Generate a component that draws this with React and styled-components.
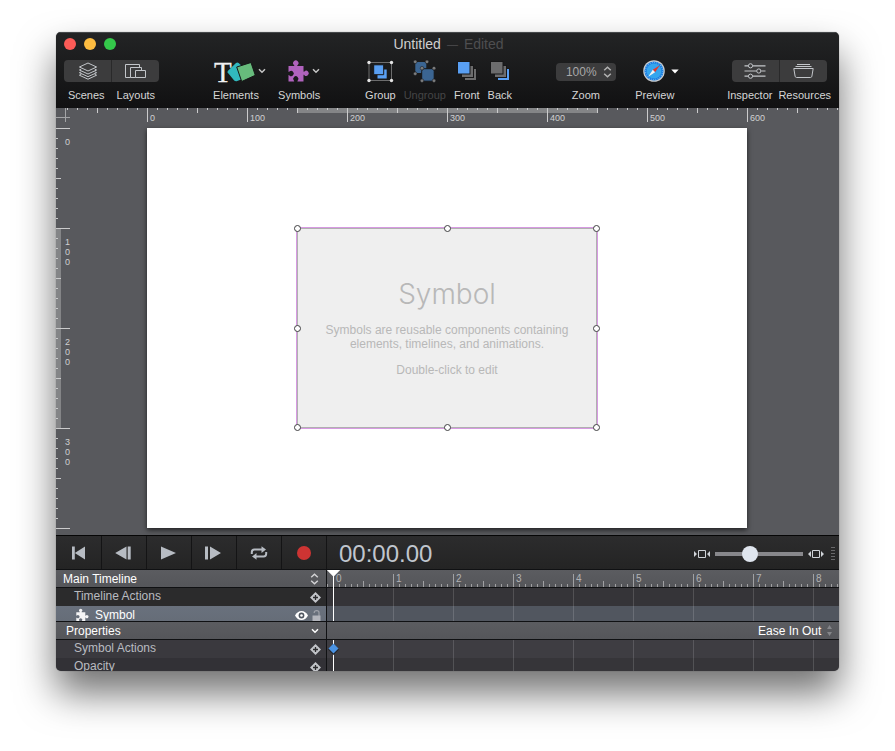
import React from "react";
import styled, { createGlobalStyle, css } from "styled-components";

const sans = '"Liberation Sans", Arial, Helvetica, sans-serif';
const ink = "#101113";
const steel = "#b7bcc3";
const panel = "#58595d";
const tick = "#cbcbcc";

const GlobalStyle = createGlobalStyle`
  *, *::before, *::after { box-sizing: border-box; }
  body { margin: 0; background: #fff; font-family: ${sans}; }
  svg { display: block; flex: none; overflow: visible; }
`;

const plainControl = css`
  appearance: none;
  margin: 0;
  padding: 0;
  border: 0;
  background: none;
  color: inherit;
  font: inherit;
  cursor: default;
`;

const Page = styled.div`
  padding: 32px 56px 80px;
  overflow: hidden;
`;

const Window = styled.main`
  border-radius: 5px;
  box-shadow: 0 0 1px rgba(0, 0, 0, 0.5), 0 22px 38px rgba(0, 0, 0, 0.56);
`;

const WindowBody = styled.div`
  border-radius: 5px;
  overflow: hidden;
  background: ${panel};
`;

/* ---------- header ---------- */

const Header = styled.header`
  height: 76px;
  background: linear-gradient(#232425, #111112);
  box-shadow: inset 0 1px 0 #45484a;
`;

const TitleBar = styled.div`
  display: grid;
  grid-template-columns: 1fr auto 1fr;
  align-items: center;
  height: 23px;
  padding: 0 6px 0 8px;
`;

const Lights = styled.div`
  display: flex;
  gap: 8px;
`;

const Light = styled.button`
  ${plainControl}
  width: 12px;
  height: 12px;
  border-radius: 50%;
  background: ${(p) => p.$color};
`;

const Title = styled.h1`
  display: flex;
  align-items: center;
  gap: 6px;
  margin: 0;
  font-size: 14px;
  line-height: 16px;
  font-weight: 400;
  color: #cfcfcf;
`;

const Faint = styled.span`
  color: #4e4e50;
`;

const Dash = styled(Faint)`
  font-size: 11px;
`;

const Toolbar = styled.div`
  display: flex;
  align-items: flex-start;
  padding: 5px 8px 0;
`;

const Spacer = styled.div`
  flex: ${(p) => p.$grow} 0 0;
`;

const ToolGroup = styled.div`
  display: flex;
  gap: ${(p) => p.$gap};
`;

const Tool = styled.button`
  ${plainControl}
  display: flex;
  flex-direction: column;
  align-items: ${(p) => (p.$indent ? "flex-start" : "center")};
  gap: 6px;
  color: #d6d6d6;
  font-size: 11px;
  line-height: 14px;
  &:disabled { color: #454546; }
`;

const ToolFace = styled.span`
  display: flex;
  align-items: center;
  gap: ${(p) => p.$gap || "0"};
  height: 22px;
  padding-left: ${(p) => p.$indent || "0"};
`;

const SegmentBlock = styled.div`
  display: flex;
  flex-direction: column;
  align-items: center;
  gap: 6px;
`;

const Segments = styled.div`
  display: flex;
  height: 22px;
  border-radius: 4px;
  overflow: hidden;
  background: #3c3c3d;
`;

const Segment = styled.button`
  ${plainControl}
  display: grid;
  place-items: center;
  width: 47px;
  & + & {
    width: 48px;
    border-left: 1px solid #29292a;
  }
`;

const SegmentLabels = styled.div`
  display: flex;
  gap: ${(p) => p.$gap};
  color: #d6d6d6;
  font-size: 11px;
  line-height: 14px;
`;

const ZoomField = styled.div`
  display: flex;
  flex-direction: column;
  align-items: center;
  gap: 7px;
  padding-top: 3px;
  color: #d6d6d6;
  font-size: 11px;
  line-height: 14px;
`;

const SelectShell = styled.div`
  display: flex;
  align-items: center;
  ${(p) => p.$boxed && css`
    width: 60px;
    height: 18px;
    padding: 0 4px 0 10px;
    border-radius: 4px;
    background: #3c3c3d;
    color: #a8a8a8;
  `}
`;

const Select = styled.select`
  ${plainControl}
  flex: ${(p) => (p.$fill ? "1 1 0" : "0 0 auto")};
  min-width: 0;
  font-family: ${sans};
  font-size: 12px;
  line-height: 16px;
  option { color: #000; }
`;

/* ---------- canvas and rulers ---------- */

const TopRuler = styled.div`
  display: flex;
  height: 20px;
`;

const Corner = styled.div`
  flex: 0 0 11px;
  min-width: 0;
`;

const TopScale = styled.div`
  flex: 1 1 0;
  min-width: 0;
  overflow: hidden;
  display: flex;
  padding-left: 80px;
  background:
    linear-gradient(90deg, ${tick} 1px, transparent 1px) 0 0 / 10px 2px repeat-x,
    linear-gradient(90deg, ${tick} 1px, transparent 1px) 30px 0 / 50px 5px repeat-x,
    linear-gradient(90deg, ${tick} 1px, transparent 1px) 80px 0 / 100px 14px repeat-x,
    linear-gradient(#848587, #848587) 230px 0 / 300px 5px no-repeat;
`;

const TopMark = styled.span`
  flex: 0 0 100px;
  padding: 4px 0 0 3px;
  font-size: 9px;
  line-height: 12px;
  color: #d0d0d1;
`;

const Workspace = styled.section`
  display: flex;
`;

const SideRuler = styled.div`
  flex: 0 0 20px;
  background:
    linear-gradient(${tick} 1px, transparent 1px) 0 0 / 2px 10px repeat-y,
    linear-gradient(${tick} 1px, transparent 1px) 0 0 / 5px 50px repeat-y,
    linear-gradient(${tick} 1px, transparent 1px) 0 0 / 14px 100px repeat-y,
    linear-gradient(#848587, #848587) 0 100px / 5px 200px no-repeat;
`;

const SideMark = styled.div`
  display: flex;
  flex-direction: column;
  height: 100px;
  padding: 9px 0 0 9px;
  font-size: 9px;
  line-height: 10px;
  color: #d0d0d1;
`;

const StageArea = styled.div`
  flex: 1 1 0;
  display: flex;
  justify-content: center;
  padding: 0 21px 7px 0;
`;

const Stage = styled.div`
  display: grid;
  place-items: center;
  flex: 0 0 600px;
  height: 400px;
  background: #fff;
  box-shadow: 0 2px 5px rgba(0, 0, 0, 0.65);
`;

const SymbolBox = styled.div`
  position: relative;
  width: 300px;
  height: 200px;
  padding-top: 46px;
  border: 1px solid #b0b0b0;
  box-shadow: 0 0 0 1px #d79ae2;
  background: #efefef;
  text-align: center;
  color: #b8b8b8;
  font-size: 12px;
  line-height: 14px;
`;

const SymbolTitle = styled.h2`
  margin: 0 0 10px;
  font-family: Inter, ${sans};
  font-size: 28px;
  line-height: 38px;
  font-weight: 300;
`;

const SymbolText = styled.p`
  margin: 0 20px 12px;
`;

const Handle = styled.span`
  position: absolute;
  left: ${(p) => p.$x};
  top: ${(p) => p.$y};
  width: 7px;
  height: 7px;
  margin: -3px;
  border: 1px solid #3f3f41;
  border-radius: 50%;
  background: #fff;
`;

/* ---------- transport ---------- */

const Transport = styled.div`
  display: flex;
  align-items: stretch;
  height: 35px;
  border-top: 1px solid #060606;
  border-bottom: 1px solid ${ink};
  background: linear-gradient(#2c2c2d, #242424);
`;

const TransportButton = styled.button`
  ${plainControl}
  display: grid;
  place-items: center;
  flex: 0 0 45px;
  & + & { border-left: 1px solid #141415; }
`;

const Clock = styled.output`
  display: flex;
  align-items: center;
  flex: 1 1 0;
  padding: 2px 0 0 12px;
  border-left: 1px solid #141415;
  font-size: 24px;
  color: #c0c6ce;
`;

const TimeZoom = styled.label`
  display: flex;
  align-items: center;
  gap: 5px;
  padding: 2px 4px 0 0;
`;

const Range = styled.input`
  appearance: none;
  width: 88px;
  height: 16px;
  margin: 0;
  background: linear-gradient(#87878b, #87878b) 0 6px / 100% 4px no-repeat;
  &::-webkit-slider-thumb {
    appearance: none;
    width: 16px;
    height: 16px;
    border-radius: 50%;
    background: #dfe5ee;
  }
`;

const Grip = styled.span`
  width: 4px;
  height: 13px;
  margin-left: 2px;
  background: repeating-linear-gradient(#68686a 0 1px, transparent 1px 3px);
`;

/* ---------- timeline ---------- */

const Split = styled.section`
  display: grid;
  grid-template-columns: 270px 1fr;
`;

const Names = styled.div`
  min-width: 0;
`;

const Tracks = styled.div`
  position: relative;
  min-width: 0;
  border-left: 1px solid ${ink};
`;

const PanelHead = styled.div`
  display: flex;
  align-items: center;
  height: 18px;
  padding: 0 7px;
  border-bottom: 1px solid ${ink};
  background: linear-gradient(#5b5c60, #55565a);
  color: #fff;
  font-size: 12px;
`;

const HeadShell = styled(SelectShell)`
  flex: ${(p) => (p.$fill ? "1 1 0" : "0 0 auto")};
  gap: ${(p) => (p.$fill ? "0" : "5px")};
  margin-left: ${(p) => (p.$fill ? "0" : "auto")};
`;

const Disclosure = styled.button`
  ${plainControl}
  display: flex;
  flex: 1 1 0;
  align-items: center;
  justify-content: space-between;
  padding-left: 3px;
  line-height: 16px;
`;

const rowTones = {
  actions: ["#2b2b2c", "#353438"],
  selected: ["linear-gradient(#69717d, #666d78)", "#51565f"],
  light: ["#3a393e", "#3e3d42"],
  dark: ["#323136", "#363539"],
};

const NameRow = styled.div`
  display: flex;
  align-items: flex-start;
  height: ${(p) => p.$height};
  padding: 0 5px 0 18px;
  overflow: hidden;
  background: ${(p) => rowTones[p.$tone][0]};
  color: ${(p) => (p.$tone === "selected" ? "#fff" : "#b9bbc0")};
  font-size: 12px;
  line-height: ${(p) => (p.$tone === "selected" ? "19px" : "17px")};
  border-bottom: ${(p) => (p.$closing ? `1px solid ${ink}` : "0")};
`;

const RowName = styled.span`
  flex: 1 1 0;
`;

const RowIcon = styled.span`
  padding: 3px 7px 0 2px;
`;

const IconButton = styled.button`
  ${plainControl}
  padding-top: 4px;
  margin-left: 4px;
`;

const TrackRow = styled.div`
  height: ${(p) => p.$height};
  background:
    linear-gradient(90deg, rgba(255, 255, 255, 0.14) 1px, transparent 1px) 6px 0 / 60px 100%,
    ${(p) => rowTones[p.$tone][1]};
  border-bottom: ${(p) => (p.$closing ? `1px solid ${ink}` : "0")};
`;

const TimeScale = styled.div`
  display: flex;
  height: 18px;
  padding-left: 6px;
  overflow: hidden;
  border-bottom: 1px solid ${ink};
  background:
    linear-gradient(90deg, #a0a0a2 1px, transparent 1px) 0 100% / 6px 3px repeat-x,
    linear-gradient(90deg, #a0a0a2 1px, transparent 1px) 6px 100% / 30px 6px repeat-x,
    linear-gradient(90deg, #a0a0a2 1px, transparent 1px) 6px 100% / 60px 13px repeat-x,
    linear-gradient(#5b5c60, #55565a);
`;

const TimeMark = styled.span`
  flex: 0 0 60px;
  padding: 4px 0 0 3px;
  font-size: 10px;
  line-height: 10px;
  color: #b2b2b4;
`;

const Playhead = styled.div`
  position: absolute;
  left: 6px;
  top: 0;
  bottom: 1px;
  width: 1px;
  background: #fff;
`;

const PlayheadCap = styled.svg`
  position: absolute;
  left: -7px;
  top: 0;
`;

const PropertyPlayhead = styled(Playhead)`
  top: 18px;
  bottom: 0;
`;

const Keyframe = styled.svg`
  position: absolute;
  left: -5px;
  top: 3px;
`;

/* ---------- icons ---------- */

const PUZZLE =
  "M.5 5H6C6.6 5 6.3 4.4 5.9 4A2.7 2.7 0 1 1 9.7 4C9.2 4.5 9 5 9.6 5H15.5V10.3C15.5 10.9 16 10.8 16.4 10.4A2.6 2.6 0 1 1 16.4 14.2C16 13.7 15.5 13.6 15.5 14.3V20.5H9.8C9.2 20.5 9.4 20 9.8 19.5A2.6 2.6 0 1 0 5.8 19.5C6.2 20 6.4 20.5 5.8 20.5H.5V14.5C.5 13.9 .9 14 1.4 14.4A2.6 2.6 0 1 0 1.4 10.6C.9 11 .5 11 .5 10.4Z";

const Chevron = ({ color = "#c4c4c4", size = 8 }) => (
  <svg width={size} height="6" viewBox="0 0 8 6">
    <path d="M1 1.2L4 4.2L7 1.2" fill="none" stroke={color} strokeWidth="1.5" />
  </svg>
);

const UpDown = ({ color = "#b4b4b4" }) => (
  <svg width="9" height="12" viewBox="0 0 9 12">
    <path d="M1.2 4.3L4.5 1.2L7.8 4.3M1.2 7.7L4.5 10.8L7.8 7.7" fill="none" stroke={color} strokeWidth="1.4" />
  </svg>
);

const UpDownSolid = () => (
  <svg width="5" height="11" viewBox="0 0 5 11">
    <path d="M0 4L2.5 0L5 4ZM0 7L2.5 11L5 7Z" fill="#85868a" />
  </svg>
);

const ScenesIcon = () => (
  <svg width="20" height="18" viewBox="0 0 20 18" fill="none" stroke="#c3c6ca">
    <path d="M10 1L18.6 5L10 9L1.4 5Z" />
    <path d="M3.3 7L1.4 8L10 12L18.6 8L16.7 7M3.3 9.8L1.4 10.7L10 14.7L18.6 10.7L16.7 9.8M3.3 12.3L1.4 13.2L10 17.2L18.6 13.2L16.7 12.3" />
  </svg>
);

const LayoutsIcon = () => (
  <svg width="21" height="15" viewBox="0 0 21 15" fill="none" stroke="#c3c6ca">
    <path d="M5.5 13.5H.5V.5H14.5V3.5M10.5 13.5H5.5V3.5H16.5V6.5" />
    <path d="M10.5 6.5H20.5V13.5H10.5Z" />
  </svg>
);

const ElementsIcon = () => (
  <svg width="41" height="22" viewBox="0 0 41 22">
    <text x="-1" y="22" fontFamily='"Liberation Serif", serif' fontSize="29" fill="#f0f1f2" stroke="#f0f1f2" strokeWidth=".3">T</text>
    <path d="M12.6 12.5Q12.3 11.4 13 10.7L21 3Q22.4 2 23.6 3L29 8L27.5 19L21.6 21.2Q20 21.4 19.2 20.5Z" fill="#31b9be" />
    <path d="M21.7 7L36 2.5L40.3 15.3L26.7 21.5Z" fill="#67bb7c" stroke="#161617" />
  </svg>
);

const PuzzleIcon = () => (
  <svg width="20" height="21" viewBox="0 0 20 21">
    <path d={PUZZLE} fill="#b062bd" />
  </svg>
);

const GroupIcon = () => (
  <svg width="27" height="22" viewBox="0 0 27 22">
    <path d="M2 2.5H24.5V20.5H2Z" fill="none" stroke="#6c6c6d" />
    <path d="M10.5 9.5H19.7V18.5H10.5Z" fill="#599ff3" />
    <path d="M6.7 4.8H16.7V14.7H6.7Z" fill="#599ff3" stroke="#171718" />
    {[[2, 2.5], [24.5, 2.5], [2, 20.5], [24.5, 20.5]].map(([x, y]) => (
      <circle key={`${x}-${y}`} cx={x} cy={y} r="1.7" fill="#e3e3e3" />
    ))}
  </svg>
);

const UngroupIcon = () => (
  <svg width="24" height="22" viewBox="0 0 24 22">
    <rect x="2.3" y="2" width="11" height="11" rx="2" fill="#3b6592" />
    <rect x="8.7" y="8.7" width="12.5" height="12.5" rx="2.5" fill="#3b6592" stroke="#171718" />
    {[[2.2, 1.8], [14, 1.8], [2.2, 13.7], [9, 8.2], [21, 8.2], [9, 20.7], [21, 20.7]].map(([x, y]) => (
      <circle key={`${x}-${y}`} cx={x} cy={y} r="1.8" fill="#7b7c7d" stroke="#171718" strokeWidth=".5" />
    ))}
  </svg>
);

const StackIcon = ({ front, back }) => (
  <svg width="20" height="20" viewBox="0 0 20 20" stroke="#171718">
    <rect x="7.5" y="7.5" width="12" height="12" fill={back} />
    <rect x="4.5" y="4.5" width="12" height="12" fill="#6c6c6d" />
    <rect x=".5" y=".5" width="12.5" height="12.5" fill={front} />
  </svg>
);

const CompassIcon = () => (
  <svg width="22" height="22" viewBox="0 0 22 22">
    <circle cx="11" cy="11" r="10.8" fill="#c9ccd0" />
    <circle cx="11" cy="11" r="9.6" fill="#1d7fe0" />
    <circle cx="11" cy="11" r="7.4" fill="#35a5ee" />
    <circle cx="11" cy="11" r="8.6" fill="none" stroke="#8fc8f5" strokeWidth="1.2" strokeDasharray=".6 1.65" />
    <path d="M16.8 5.2L12.1 12.2L9.8 9.8Z" fill="#e5372c" />
    <path d="M5.2 16.8L9.8 9.8L12.1 12.2Z" fill="#f3f3f3" />
  </svg>
);

const CaretIcon = () => (
  <svg width="8" height="5" viewBox="0 0 8 5">
    <path d="M.3 .5H7.7L4 4.5Z" fill="#fff" />
  </svg>
);

const InspectorIcon = () => (
  <svg width="22" height="16" viewBox="0 0 22 16" fill="none" stroke="#c3c6ca">
    <path d="M.5 2.8H4.2M8.8 2.8H21.5M.5 8H12.5M17.2 8H21.5M.5 13.2H4.2M8.8 13.2H21.5" strokeWidth="1.2" />
    <circle cx="6.5" cy="2.8" r="2.1" />
    <circle cx="14.8" cy="8" r="2.1" />
    <circle cx="6.5" cy="13.2" r="2.1" />
  </svg>
);

const ResourcesIcon = () => (
  <svg width="21" height="16" viewBox="0 0 21 16" fill="none" stroke="#c3c6ca">
    <path d="M4 1.5H17M2.5 3.5H18.5" />
    <path d="M.8 5.5H20.2L18.9 13.2Q18.6 14.5 17.4 14.5H3.6Q2.4 14.5 2.1 13.2Z" />
  </svg>
);

const TransportIcon = ({ d }) => (
  <svg width="18" height="14" viewBox="0 0 18 14">
    <path d={d} fill={steel} />
  </svg>
);

const LoopIcon = () => (
  <svg width="18" height="14" viewBox="0 0 18 14">
    <path d="M1.8 8V6.2Q1.8 3.6 4.4 3.6H12M16.2 6V7.8Q16.2 10.4 13.6 10.4H6" fill="none" stroke={steel} strokeWidth="2" />
    <path d="M11.5 .3L16 3.6L11.5 6.9ZM6.5 7.1L2 10.4L6.5 13.7Z" fill={steel} />
  </svg>
);

const RecordIcon = () => (
  <svg width="14" height="14" viewBox="0 0 14 14">
    <circle cx="7" cy="7" r="7" fill="#cd3433" />
  </svg>
);

const SpanIcon = ({ outward }) => (
  <svg width="16" height="8" viewBox="0 0 16 8">
    <path d="M4.5 .5H11.5V7.5H4.5Z" fill="none" stroke="#d0d4d9" />
    <path d={outward ? "M3 1V7L0 4ZM13 1V7L16 4Z" : "M0 1V7L3 4ZM16 1V7L13 4Z"} fill="#d0d4d9" />
  </svg>
);

const AddKeyIcon = () => (
  <svg width="11" height="11" viewBox="0 0 11 11">
    <path d="M5.5 0L11 5.5L5.5 11L0 5.5Z" fill="#c2c4c9" />
    <path d="M5.5 3V8M3 5.5H8" stroke="#2c2c2e" strokeWidth="1.3" />
  </svg>
);

const EyeIcon = () => (
  <svg width="13" height="11" viewBox="0 0 13 11">
    <path d="M0 5.5Q2.5 1 6.5 1T13 5.5Q10.5 10 6.5 10T0 5.5Z" fill="#fff" />
    <circle cx="6.5" cy="5.5" r="2.9" fill="#4f5660" />
    <circle cx="6.5" cy="5.5" r="1.3" fill="#fff" />
  </svg>
);

const LockIcon = () => (
  <svg width="9" height="12" viewBox="0 0 9 12">
    <path d="M2.2 3V2.6Q2.2 .7 4.6 .7T7 2.6V6" fill="none" stroke="#9fa2aa" strokeWidth="1.2" />
    <path d="M.5 5.5H8.5V12H.5Z" fill="#b3b5bc" />
  </svg>
);

/* ---------- page ---------- */

const lights = [
  ["Close", "#fc5b57"],
  ["Minimize", "#fdbc40"],
  ["Zoom window", "#34c84a"],
];

const transport = [
  ["Go to start", <TransportIcon key="i" d="M2 .5H4.8V13.5H2ZM15 .5V13.5L4.8 7Z" />],
  ["Previous frame", <TransportIcon key="i" d="M.2 7L11.5 .5V13.5ZM12.7 .5H15.7V13.5H12.7Z" />],
  ["Play", <TransportIcon key="i" d="M1 .5V13.5L16 7Z" />],
  ["Next frame", <TransportIcon key="i" d="M0 .5H3V13.5H0ZM5 .5V13.5L16 7Z" />],
  ["Loop", <LoopIcon key="i" />],
  ["Record", <RecordIcon key="i" />],
];

const handles = [
  ["-1px", "-1px"], ["50%", "-1px"], ["100%", "-1px"],
  ["-1px", "50%"], ["100%", "50%"],
  ["-1px", "100%"], ["50%", "100%"], ["100%", "100%"],
];

function SegmentPair({ gap, items }) {
  return (
    <SegmentBlock>
      <Segments>
        {items.map(([name, icon]) => (
          <Segment key={name} aria-labelledby={`seg-${name}`}>{icon}</Segment>
        ))}
      </Segments>
      <SegmentLabels $gap={gap}>
        {items.map(([name]) => (
          <span key={name} id={`seg-${name}`}>{name}</span>
        ))}
      </SegmentLabels>
    </SegmentBlock>
  );
}

function ToolButton({ label, indent, gap, disabled, children }) {
  return (
    <Tool disabled={disabled} $indent={indent}>
      <ToolFace $indent={indent} $gap={gap}>{children}</ToolFace>
      <span>{label}</span>
    </Tool>
  );
}

function AddKey({ of }) {
  return (
    <IconButton aria-label={`Add keyframe to ${of}`}>
      <AddKeyIcon />
    </IconButton>
  );
}

export default function App() {
  return (
    <Page>
      <GlobalStyle />
      <Window>
        <WindowBody>
          <Header>
            <TitleBar>
              <Lights>
                {lights.map(([name, color]) => (
                  <Light key={name} aria-label={name} $color={color} />
                ))}
              </Lights>
              <Title>
                Untitled <Dash>—</Dash> <Faint>Edited</Faint>
              </Title>
            </TitleBar>
            <Toolbar>
              <SegmentPair gap="12px" items={[["Scenes", <ScenesIcon key="i" />], ["Layouts", <LayoutsIcon key="i" />]]} />
              <Spacer $grow={53} />
              <ToolGroup $gap="12px">
                <ToolButton label="Elements" indent="2px" gap="2px">
                  <ElementsIcon />
                  <Chevron />
                </ToolButton>
                <ToolButton label="Symbols" indent="10px" gap="4px">
                  <PuzzleIcon />
                  <Chevron />
                </ToolButton>
              </ToolGroup>
              <Spacer $grow={44} />
              <ToolGroup $gap="8px">
                <ToolButton label="Group"><GroupIcon /></ToolButton>
                <ToolButton label="Ungroup" disabled><UngroupIcon /></ToolButton>
                <ToolButton label="Front"><StackIcon front="#599ff3" back="#6c6c6d" /></ToolButton>
                <ToolButton label="Back"><StackIcon front="#6c6c6d" back="#599ff3" /></ToolButton>
              </ToolGroup>
              <Spacer $grow={43} />
              <ZoomField>
                <SelectShell $boxed>
                  <Select $fill id="zoom" defaultValue="100%">
                    <option>100%</option>
                  </Select>
                  <UpDown />
                </SelectShell>
                <label htmlFor="zoom">Zoom</label>
              </ZoomField>
              <Spacer $grow={19} />
              <ToolButton label="Preview" indent="8px" gap="6px">
                <CompassIcon />
                <CaretIcon />
              </ToolButton>
              <Spacer $grow={47} />
              <SegmentPair gap="6px" items={[["Inspector", <InspectorIcon key="i" />], ["Resources", <ResourcesIcon key="i" />]]} />
            </Toolbar>
          </Header>

          <TopRuler>
            <Corner>
              <svg width="14" height="14" viewBox="0 0 14 14">
                <path d="M9.5 0V14M0 9.5H14" stroke="#a3a4a6" />
              </svg>
            </Corner>
            <TopScale>
              {[0, 100, 200, 300, 400, 500, 600].map((n) => (
                <TopMark key={n}>{n}</TopMark>
              ))}
            </TopScale>
          </TopRuler>

          <Workspace>
            <SideRuler>
              {[0, 100, 200, 300].map((n) => (
                <SideMark key={n}>
                  {String(n).split("").map((digit, i) => (
                    <span key={i}>{digit}</span>
                  ))}
                </SideMark>
              ))}
            </SideRuler>
            <StageArea>
              <Stage>
                <SymbolBox>
                  <SymbolTitle>Symbol</SymbolTitle>
                  <SymbolText>
                    Symbols are reusable components containing elements, timelines, and animations.
                  </SymbolText>
                  <SymbolText>Double-click to edit</SymbolText>
                  {handles.map(([x, y]) => (
                    <Handle key={x + y} $x={x} $y={y} />
                  ))}
                </SymbolBox>
              </Stage>
            </StageArea>
          </Workspace>

          <Transport>
            {transport.map(([name, icon]) => (
              <TransportButton key={name} aria-label={name}>{icon}</TransportButton>
            ))}
            <Clock>00:00.00</Clock>
            <TimeZoom>
              <SpanIcon />
              <Range type="range" defaultValue={37} aria-label="Timeline zoom" />
              <SpanIcon outward />
              <Grip />
            </TimeZoom>
          </Transport>

          <Split>
            <Names>
              <PanelHead>
                <HeadShell $fill>
                  <Select $fill aria-label="Timeline" defaultValue="Main Timeline">
                    <option>Main Timeline</option>
                  </Select>
                  <UpDown color="#d3d3d5" />
                </HeadShell>
              </PanelHead>
              <NameRow $tone="actions" $height="18px">
                <RowName>Timeline Actions</RowName>
                <AddKey of="Timeline Actions" />
              </NameRow>
              <NameRow $tone="selected" $height="16px" $closing>
                <RowIcon>
                  <svg width="12" height="13" viewBox="0 0 20 21">
                    <path d={PUZZLE} fill="#f4f4f5" />
                  </svg>
                </RowIcon>
                <RowName>Symbol</RowName>
                <IconButton aria-label="Hide Symbol"><EyeIcon /></IconButton>
                <IconButton aria-label="Lock Symbol"><LockIcon /></IconButton>
              </NameRow>
            </Names>
            <Tracks>
              <TimeScale>
                {[0, 1, 2, 3, 4, 5, 6, 7, 8].map((n) => (
                  <TimeMark key={n}>{n}</TimeMark>
                ))}
              </TimeScale>
              <TrackRow $tone="actions" $height="18px" />
              <TrackRow $tone="selected" $height="16px" $closing />
              <Playhead>
                <PlayheadCap width="15" height="7" viewBox="0 0 15 7">
                  <path d="M.8 0H14.2L7.5 6.7Z" fill="#fff" />
                </PlayheadCap>
              </Playhead>
            </Tracks>
          </Split>

          <Split>
            <Names>
              <PanelHead>
                <Disclosure aria-expanded="true">
                  Properties
                  <Chevron color="#fff" />
                </Disclosure>
              </PanelHead>
              <NameRow $tone="light" $height="18px">
                <RowName>Symbol Actions</RowName>
                <AddKey of="Symbol Actions" />
              </NameRow>
              <NameRow $tone="dark" $height="13px">
                <RowName>Opacity</RowName>
                <AddKey of="Opacity" />
              </NameRow>
            </Names>
            <Tracks>
              <PanelHead>
                <HeadShell>
                  <Select aria-label="Timing function" defaultValue="Ease In Out">
                    <option>Ease In Out</option>
                  </Select>
                  <UpDownSolid />
                </HeadShell>
              </PanelHead>
              <TrackRow $tone="light" $height="18px" />
              <TrackRow $tone="dark" $height="13px" />
              <PropertyPlayhead>
                <Keyframe width="11" height="12" viewBox="0 0 11 12">
                  <path d="M5.5 1L11 6.5L5.5 12L0 6.5Z" fill="#222327" />
                  <path d="M5.5 .5L10.5 5.5L5.5 10.5L.5 5.5Z" fill="#4a92e2" />
                </Keyframe>
              </PropertyPlayhead>
            </Tracks>
          </Split>
        </WindowBody>
      </Window>
    </Page>
  );
}
